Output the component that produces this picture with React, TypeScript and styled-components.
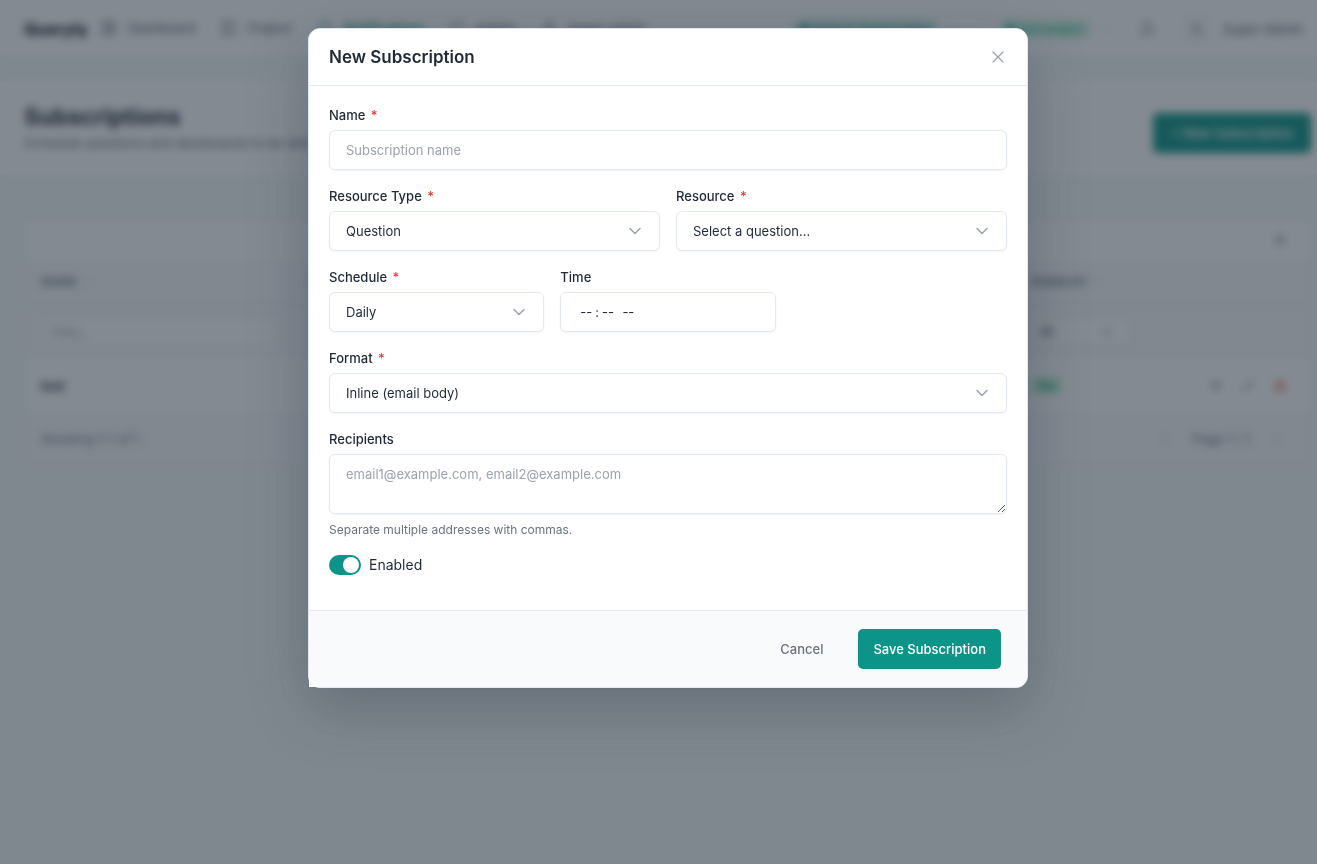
import React from 'react';
import styled, { createGlobalStyle, css } from 'styled-components';
import {
  LayoutGrid, PanelLeft, Bell, User, Shield, ChevronDown, ChevronLeft, ChevronRight,
  ChevronsUpDown, Settings, Eye, Pencil, Trash2,
} from 'lucide-react';

const color = {
  ink: '#1f2937',
  muted: '#6b7280',
  faint: '#9ca3af',
  line: '#e2e8f0',
  canvas: '#f6fbfb',
  soft: '#f8fafc',
  teal: '#0d9488',
  green: '#10b981',
  red: '#e53935',
};

const GlobalStyle = createGlobalStyle`
  *, *::before, *::after { box-sizing: border-box; }
  body {
    margin: 0;
    background: ${color.canvas};
    color: ${color.ink};
    font-family: Inter, "Liberation Sans", sans-serif;
    font-size: 14px;
    line-height: 20px;
  }
  button, input, select, textarea { font: inherit; color: inherit; }
`;

const Page = styled.div`
  min-height: 100vh;
`;

/* Top navigation */

const TopBar = styled.header`
  display: flex;
  align-items: center;
  height: 58px;
  padding: 0 14px 0 24px;
  background: #fff;
  border-bottom: 1px solid ${color.line};
`;

const Brand = styled.strong`
  width: 65px;
  font-size: 16px;
  font-weight: 800;
  color: #111827;
`;

const Nav = styled.nav`
  display: flex;
  align-self: stretch;
  margin-left: 12px;
  gap: 25px;
`;

const NavLink = styled.a<{ $active?: boolean }>`
  display: flex;
  align-items: center;
  gap: 11px;
  font-size: 13px;
  font-weight: ${(p) => (p.$active ? 600 : 500)};
  text-decoration: none;
  white-space: nowrap;
  color: ${(p) => (p.$active ? color.teal : color.muted)};
  border-bottom: 2px solid ${(p) => (p.$active ? color.teal : 'transparent')};
`;

const Account = styled.div`
  display: flex;
  align-items: center;
  margin-left: auto;
  gap: 18px;
  color: ${color.muted};
  font-size: 13px;
  font-weight: 500;
`;

const Switchers = styled.div`
  display: flex;
  gap: 37px;
`;

const Switcher = styled.button<{ $tone: string; $fill: string }>`
  display: flex;
  align-items: center;
  gap: 8px;
  padding: 0;
  border: 0;
  background: none;
  color: ${color.faint};

  span {
    padding: 2px 8px;
    border-radius: 12px;
    background: ${(p) => p.$fill};
    color: ${(p) => p.$tone};
    font-size: 12px;
    font-weight: 600;
    white-space: nowrap;
  }
`;

const Profile = styled.div`
  display: flex;
  align-items: center;
  gap: 10px;
`;

const IconButton = styled.button<{ $danger?: boolean }>`
  display: inline-flex;
  align-items: center;
  justify-content: center;
  width: 32px;
  height: 32px;
  padding: 0;
  border: 0;
  background: none;
  color: ${(p) => (p.$danger ? color.red : color.muted)};
`;

const Avatar = styled.span`
  display: flex;
  align-items: center;
  justify-content: center;
  width: 32px;
  height: 32px;
  border-radius: 6px;
  background: ${color.soft};
  color: ${color.muted};
`;

/* Page heading and subscriptions list */

const PageHeading = styled.section`
  display: flex;
  align-items: flex-end;
  justify-content: space-between;
  height: 92px;
  margin-top: 24px;
  padding: 0 6px 21px 24px;
  background: #fff;

  h1 {
    margin: 0;
    font-size: 23px;
    line-height: 32px;
    font-weight: 700;
  }

  p {
    margin: 0;
    font-size: 13px;
    color: ${color.muted};
  }
`;

const buttonBase = css`
  height: 40px;
  border: 0;
  border-radius: 5px;
  font-size: 13px;
  font-weight: 500;
  white-space: nowrap;
  cursor: pointer;
`;

const PrimaryButton = styled.button<{ $wide?: boolean }>`
  ${buttonBase}
  padding: 0 ${(p) => (p.$wide ? 18 : 15)}px;
  background: ${color.teal};
  color: #fff;
`;

const QuietButton = styled.button`
  ${buttonBase}
  padding: 0 15px;
  background: none;
  color: ${color.muted};
`;

const Card = styled.section`
  margin: 45px 6px 0 24px;
  background: #fff;
  border: 1px solid ${color.line};
  border-radius: 6px;
`;

const CardTools = styled.div`
  display: flex;
  justify-content: flex-end;
  align-items: center;
  height: 40px;
  padding: 0 14px;
`;

const DataTable = styled.table`
  width: 100%;
  table-layout: fixed;
  border-collapse: collapse;
  text-align: left;
  font-size: 13px;

  th, td { padding: 0 16px; }
  thead { background: ${color.soft}; }
  th {
    height: 45px;
    font-size: 12px;
    font-weight: 600;
    color: ${color.muted};
    border-bottom: 1px solid ${color.line};
  }
  th svg { margin-left: 6px; color: ${color.faint}; }
  thead td { height: 54px; }
  tbody td { height: 53px; font-weight: 600; }
  tbody td:last-child { text-align: right; padding: 0 14px; }
`;

const NameColumn = styled.col`width: 21%;`;
const ResourceColumn = styled.col`width: 56%;`;
const EnabledColumn = styled.col`width: 11%;`;
const ActionsColumn = styled.col`width: 12%;`;

const FilterInput = styled.input`
  width: 100%;
  height: 28px;
  padding: 0 10px;
  border: 1px solid ${color.line};
  border-radius: 4px;
  background: #fff;
  font-size: 12px;
  &::placeholder { color: ${color.faint}; }
`;

const Status = styled.span`
  padding: 2px 5px;
  border-radius: 4px;
  background: #d1fae5;
  color: #059669;
  font-size: 12px;
  font-weight: 600;
`;

const CardFooter = styled.div`
  display: flex;
  justify-content: space-between;
  align-items: center;
  height: 54px;
  padding: 0 16px;
  background: ${color.soft};
  font-size: 13px;
  color: ${color.muted};
`;

const Pager = styled.div`
  display: flex;
  align-items: center;
  gap: 12px;
`;

/* Modal */

const Backdrop = styled.div`
  position: fixed;
  inset: 0;
  overflow: auto;
  padding: 28px 16px 28px 35px;
  background: rgba(31, 41, 55, 0.55);
  backdrop-filter: blur(4px);
`;

const Dialog = styled.form`
  max-width: 720px;
  margin: 0 auto;
  background: #fff;
  border: 1px solid ${color.line};
  border-radius: 12px;
  box-shadow: 0 20px 60px rgba(17, 24, 39, 0.25);
`;

const DialogHeader = styled.header`
  display: flex;
  align-items: center;
  justify-content: space-between;
  height: 57px;
  padding: 0 20px;
  border-bottom: 1px solid ${color.line};

  h2 {
    margin: 0;
    font-size: 17px;
    line-height: 24px;
    font-weight: 600;
  }
`;

const CloseButton = styled.button`
  display: flex;
  padding: 3px;
  border: 0;
  background: none;
  color: ${color.faint};
`;

const DialogBody = styled.div`
  display: flex;
  flex-direction: column;
  gap: 16px;
  padding: 19px 20px 35px;
`;

const Row = styled.div<{ $columns: number }>`
  display: grid;
  grid-template-columns: repeat(${(p) => p.$columns}, 1fr);
  gap: 16px;
`;

const FieldBox = styled.div`
  display: flex;
  flex-direction: column;
  gap: 5px;
`;

const Label = styled.label`
  font-size: 13px;
  line-height: 20px;
  font-weight: 500;
`;

const Required = styled.span`
  margin-left: 2px;
  color: ${color.red};
`;

const controlStyle = css`
  display: block;
  width: 100%;
  height: 40px;
  padding: 0 16px;
  border: 1px solid ${color.line};
  border-radius: 6px;
  background: #fff;
  box-shadow: 0 1px 2px rgba(17, 24, 39, 0.05);
  font-size: 13px;
  line-height: 20px;
  &::placeholder { color: ${color.faint}; opacity: 1; }
`;

const TextInput = styled.input`
  ${controlStyle}
  &::-webkit-calendar-picker-indicator { display: none; }
  &::-webkit-datetime-edit-hour-field,
  &::-webkit-datetime-edit-minute-field,
  &::-webkit-datetime-edit-ampm-field { padding: 0 3px; }
`;

const TextArea = styled.textarea`
  ${controlStyle}
  height: 60px;
  padding: 9px 16px;
  resize: vertical;
`;

const SelectWrap = styled.div<{ $compact?: boolean }>`
  position: relative;
  width: ${(p) => (p.$compact ? '102px' : '100%')};

  select {
    ${controlStyle}
    appearance: none;
    ${(p) => p.$compact && css`
      height: 28px;
      padding: 0 8px;
      font-size: 12px;
    `}
  }

  svg {
    position: absolute;
    top: ${(p) => (p.$compact ? 6 : 12)}px;
    right: 17px;
    pointer-events: none;
  }
`;

const Hint = styled.p`
  margin: 2px 0 0;
  font-size: 12px;
  line-height: 18px;
  color: ${color.muted};
`;

const ToggleLabel = styled.label`
  display: flex;
  align-items: center;
  align-self: flex-start;
  gap: 8px;
`;

const Toggle = styled.input`
  appearance: none;
  display: flex;
  align-items: center;
  width: 32px;
  height: 20px;
  margin: 0;
  padding: 0 2px;
  border-radius: 10px;
  background: #cbd5e1;

  &::before {
    content: '';
    width: 16px;
    height: 16px;
    border-radius: 50%;
    background: #fff;
  }

  &:checked {
    justify-content: flex-end;
    background: ${color.teal};
  }
`;

const DialogFooter = styled.footer`
  display: flex;
  align-items: center;
  justify-content: flex-end;
  gap: 20px;
  height: 77px;
  padding: 0 26px;
  background: ${color.soft};
  border-top: 1px solid ${color.line};
  border-bottom-right-radius: 11px;
`;

type FieldProps = { id: string; label: string; required?: boolean; children: React.ReactNode };

function Field({ id, label, required, children }: FieldProps) {
  return (
    <FieldBox>
      <Label htmlFor={id}>
        {label}
        {required && <Required> *</Required>}
      </Label>
      {children}
    </FieldBox>
  );
}

type SelectProps = { id: string; options: string[]; compact?: boolean; ariaLabel?: string };

function Select({ id, options, compact, ariaLabel }: SelectProps) {
  return (
    <SelectWrap $compact={compact}>
      <select id={id} aria-label={ariaLabel}>
        {options.map((o) => (
          <option key={o}>{o}</option>
        ))}
      </select>
      <svg width="16" height="16" viewBox="0 0 16 16" fill="none" stroke={color.faint} strokeWidth="1.5" strokeLinecap="round" strokeLinejoin="round" aria-hidden="true">
        <path d="M3 5.5l5 5 5-5" />
      </svg>
    </SelectWrap>
  );
}

function SubscriptionsPage() {
  return (
    <Page>
      <TopBar>
        <Brand>Queryly</Brand>
        <Nav>
          <NavLink href="#dashboard"><LayoutGrid size={16} />Dashboard</NavLink>
          <NavLink href="#project"><PanelLeft size={16} />Project</NavLink>
          <NavLink href="#notifications" $active><Bell size={16} />Notifications</NavLink>
          <NavLink href="#admin"><Shield size={16} />Admin</NavLink>
          <NavLink href="#super"><User size={16} />Super admin</NavLink>
        </Nav>
        <Account>
          <Switchers>
            <Switcher $tone={color.teal} $fill="#dff5f2">
              <span>● Default Organization</span>
              <ChevronDown size={12} />
            </Switcher>
            <Switcher $tone={color.green} $fill="#e3f9f1">
              <span>● test project</span>
              <ChevronDown size={12} />
            </Switcher>
          </Switchers>
          <IconButton aria-label="Notifications"><Bell size={16} /></IconButton>
          <Profile>
            <Avatar>S</Avatar>
            Super Admin
          </Profile>
        </Account>
      </TopBar>

      <PageHeading>
        <div>
          <h1>Subscriptions</h1>
          <p>Schedule questions and dashboards to be delivered by email.</p>
        </div>
        <PrimaryButton $wide>+ New Subscription</PrimaryButton>
      </PageHeading>

      <Card>
        <CardTools>
          <IconButton aria-label="Table settings"><Settings size={12} /></IconButton>
        </CardTools>
        <DataTable>
          <colgroup>
            <NameColumn />
            <ResourceColumn />
            <EnabledColumn />
            <ActionsColumn />
          </colgroup>
          <thead>
            <tr>
              <th>NAME<ChevronsUpDown size={8} /></th>
              <th>RESOURCE</th>
              <th>ENABLED<ChevronsUpDown size={8} /></th>
              <th aria-label="Actions" />
            </tr>
            <tr>
              <td><FilterInput aria-label="Filter by name" placeholder="Filter..." /></td>
              <td />
              <td><Select id="enabled-filter" compact ariaLabel="Filter by enabled" options={['All', 'Yes', 'No']} /></td>
              <td />
            </tr>
          </thead>
          <tbody>
            <tr>
              <td>test</td>
              <td />
              <td><Status>Yes</Status></td>
              <td>
                <IconButton aria-label="View"><Eye size={12} /></IconButton>
                <IconButton aria-label="Edit"><Pencil size={12} /></IconButton>
                <IconButton aria-label="Delete" $danger><Trash2 size={12} /></IconButton>
              </td>
            </tr>
          </tbody>
        </DataTable>
        <CardFooter>
          <span>Showing 1-1 of 1</span>
          <Pager>
            <IconButton aria-label="Previous page"><ChevronLeft size={10} /></IconButton>
            Page 1 / 1
            <IconButton aria-label="Next page"><ChevronRight size={10} /></IconButton>
          </Pager>
        </CardFooter>
      </Card>
    </Page>
  );
}

export default function App() {
  return (
    <>
      <GlobalStyle />
      <SubscriptionsPage />
      <Backdrop>
        <Dialog role="dialog" aria-modal="true" aria-labelledby="dialog-title" onSubmit={(e) => e.preventDefault()}>
          <DialogHeader>
            <h2 id="dialog-title">New Subscription</h2>
            <CloseButton type="button" aria-label="Close">
              <svg width="12" height="12" viewBox="0 0 12 12" stroke="currentColor" strokeWidth="1.3" strokeLinecap="round">
                <path d="M1 1l10 10M11 1L1 11" />
              </svg>
            </CloseButton>
          </DialogHeader>
          <DialogBody>
            <Field id="name" label="Name" required>
              <TextInput id="name" type="text" placeholder="Subscription name" />
            </Field>
            <Row $columns={2}>
              <Field id="type" label="Resource Type" required>
                <Select id="type" options={['Question', 'Dashboard']} />
              </Field>
              <Field id="resource" label="Resource" required>
                <Select id="resource" options={['Select a question...']} />
              </Field>
            </Row>
            <Row $columns={3}>
              <Field id="schedule" label="Schedule" required>
                <Select id="schedule" options={['Daily', 'Weekly', 'Monthly']} />
              </Field>
              <Field id="time" label="Time">
                <TextInput id="time" type="time" />
              </Field>
            </Row>
            <Field id="format" label="Format" required>
              <Select id="format" options={['Inline (email body)']} />
            </Field>
            <Field id="recipients" label="Recipients">
              <TextArea id="recipients" placeholder="email1@example.com, email2@example.com" />
              <Hint>Separate multiple addresses with commas.</Hint>
            </Field>
            <ToggleLabel>
              <Toggle type="checkbox" role="switch" defaultChecked />
              Enabled
            </ToggleLabel>
          </DialogBody>
          <DialogFooter>
            <QuietButton type="button">Cancel</QuietButton>
            <PrimaryButton type="submit">Save Subscription</PrimaryButton>
          </DialogFooter>
        </Dialog>
      </Backdrop>
    </>
  );
}
